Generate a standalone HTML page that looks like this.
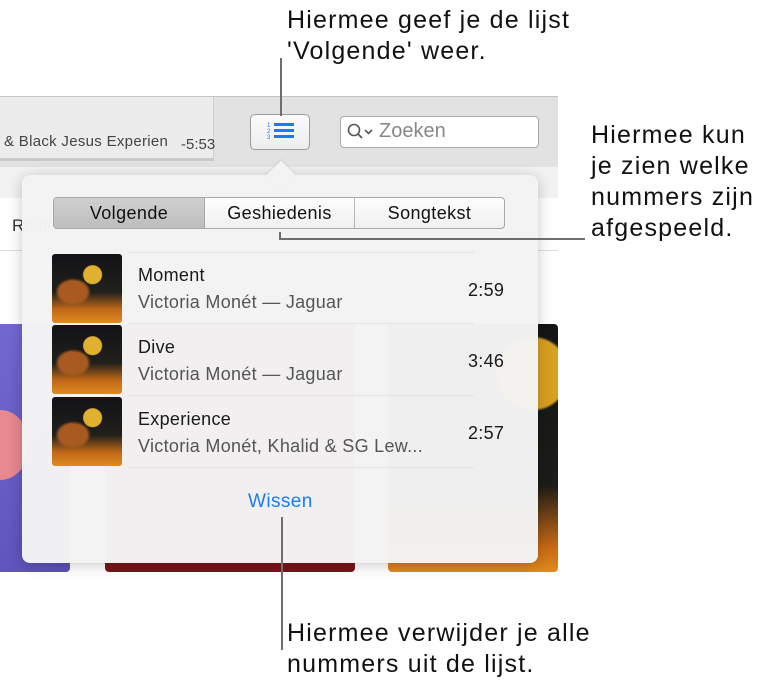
<!DOCTYPE html>
<html><head><meta charset="utf-8"><style>
*{margin:0;padding:0;box-sizing:border-box}
body{width:769px;height:689px;background:#fff;position:relative;overflow:hidden;font-family:"Liberation Sans",sans-serif}
.a{position:absolute}
.ann{position:absolute;font-size:25px;letter-spacing:1.2px;line-height:31px;color:#111;white-space:nowrap}
.ln{position:absolute;background:#6e6e6e}
.t1{font-size:18px;color:#1a1a1a;letter-spacing:0.3px}
.t2{font-size:18px;color:#555;letter-spacing:0.3px}
.art{position:absolute;width:70px;height:69px;border-radius:3px;overflow:hidden;background:radial-gradient(circle at 58% 30%,#e0b030 0 9px,transparent 10px),radial-gradient(ellipse at 30% 55%,#a85a20 0 14px,transparent 18px),linear-gradient(180deg,#141216 0%,#20201c 55%,#c06818 80%,#e08a20 100%)}
</style></head><body>
<div class="a" style="left:0;top:96px;width:558px;height:71px;background:#e2e2e2;border-top:1px solid #c4c4c4"></div>
<div class="a" style="left:0;top:97px;width:214px;height:64px;background:#ececec;border-bottom:3px solid #c9c9c9;border-right:1px solid #d0d0d0"></div>
<div class="a" style="left:4px;top:133px;font-size:15px;color:#444;letter-spacing:0.3px">&amp; Black Jesus Experien</div>
<div class="a" style="left:181px;top:136px;font-size:15px;color:#444">-5:53</div>
<div class="a" style="left:250px;top:114px;width:60px;height:36px;border:1px solid #9c9c9c;border-radius:5px;background:linear-gradient(#fbfbfb,#ededed)"></div>
<svg class="a" style="left:264px;top:121px" width="32" height="22"><g fill="#1a7bf2"><rect x="10" y="2" width="20" height="3"/><rect x="10" y="8" width="20" height="3"/><rect x="10" y="14" width="20" height="3"/><text x="3" y="6" font-size="6" font-family="Liberation Sans">1</text><text x="3" y="12" font-size="6" font-family="Liberation Sans">2</text><text x="3" y="18" font-size="6" font-family="Liberation Sans">3</text></g></svg>
<div class="a" style="left:340px;top:116px;width:199px;height:32px;background:#fff;border:1px solid #a8a8a8;border-radius:4px"></div>
<svg class="a" style="left:346px;top:121px;width:34px;height:22px;background:#fff"><circle cx="8" cy="9" r="5.5" fill="none" stroke="#555" stroke-width="1.6"/><line x1="12" y1="13" x2="16" y2="17" stroke="#555" stroke-width="1.8"/><path d="M19 9l3.5 3.5L26 9" fill="none" stroke="#555" stroke-width="1.6"/></svg>
<div class="a" style="left:379px;top:120px;font-size:20px;color:#888">Zoeken</div>
<div class="a" style="left:0;top:167px;width:558px;height:31px;background:#f2f2f2"></div>
<div class="a" style="left:0;top:250px;width:558px;height:1px;background:#ddd"></div>
<div class="a" style="left:12px;top:216px;font-size:17px;color:#333">Radio</div>
<div class="a" style="left:0;top:324px;width:70px;height:248px;background:linear-gradient(135deg,#7268d0,#5a50b8);border-radius:0 0 4px 0"></div>
<div class="a" style="left:0;top:410px;width:26px;height:70px;background:#e88890;border-radius:0 30px 30px 0"></div>
<div class="a" style="left:105px;top:324px;width:250px;height:248px;background:#7a1418;border-radius:4px"></div>
<div class="a" style="left:388px;top:324px;width:170px;height:248px;background:radial-gradient(circle at 85% 20%,#d8a020 0 35px,transparent 38px),linear-gradient(180deg,#151515 0%,#1c1c18 65%,#c86a14 90%,#e08a20 100%);border-radius:4px"></div>
<div class="a" style="left:22px;top:175px;width:516px;height:388px;background:rgba(243,243,243,0.985);border-radius:8px;box-shadow:0 2px 14px rgba(0,0,0,0.22)"></div>
<div class="a" style="left:270px;top:165px;width:22px;height:22px;background:#f3f3f3;transform:rotate(45deg);box-shadow:-1px -1px 2px rgba(0,0,0,0.08)"></div>
<div class="a" style="left:53px;top:197px;width:452px;height:32px;border:1px solid #a8a8a8;border-radius:4px;background:linear-gradient(#fdfdfd,#f0f0f0);display:flex;font-size:18px;color:#111;overflow:hidden;letter-spacing:0.4px">
<div style="width:151px;text-align:center;line-height:30px;background:linear-gradient(#d0d0d0,#bdbdbd);border-right:1px solid #a8a8a8">Volgende</div>
<div style="width:150px;text-align:center;line-height:30px;border-right:1px solid #b8b8b8">Geshiedenis</div>
<div style="flex:1;text-align:center;line-height:30px">Songtekst</div></div>
<div class="a" style="left:128px;top:252px;width:346px;height:1px;background:#e2e2e2"></div>
<div class="art" style="left:52px;top:254px"></div>
<div class="a t1" style="left:138px;top:265px">Moment</div>
<div class="a t2" style="left:138px;top:292px">Victoria Monét — Jaguar</div>
<div class="a t1" style="left:468px;top:280px">2:59</div>
<div class="a" style="left:128px;top:323px;width:346px;height:1px;background:#e2e2e2"></div>
<div class="art" style="left:52px;top:325px"></div>
<div class="a t1" style="left:138px;top:337px">Dive</div>
<div class="a t2" style="left:138px;top:364px">Victoria Monét — Jaguar</div>
<div class="a t1" style="left:468px;top:351px">3:46</div>
<div class="a" style="left:128px;top:395px;width:346px;height:1px;background:#e2e2e2"></div>
<div class="art" style="left:52px;top:397px"></div>
<div class="a t1" style="left:138px;top:409px">Experience</div>
<div class="a t2" style="left:138px;top:436px">Victoria Monét, Khalid &amp; SG Lew...</div>
<div class="a t1" style="left:468px;top:423px">2:57</div>
<div class="a" style="left:128px;top:467px;width:346px;height:1px;background:#e2e2e2"></div>
<div class="a" style="left:248px;top:491px;font-size:19px;color:#1a7bf2;letter-spacing:0.4px">Wissen</div>
<div class="ann" style="left:287px;top:5px">Hiermee geef je de lijst<br>'Volgende' weer.</div>
<div class="ln" style="left:280px;top:58px;width:2px;height:58px"></div>
<div class="ann" style="left:591px;top:120px">Hiermee kun<br>je zien welke<br>nummers zijn<br>afgespeeld.</div>
<div class="ln" style="left:279px;top:232px;width:2px;height:8px"></div>
<div class="ln" style="left:279px;top:238px;width:306px;height:2px"></div>
<div class="ln" style="left:281px;top:517px;width:2px;height:133px"></div>
<div class="ann" style="left:287px;top:618px">Hiermee verwijder je alle<br>nummers uit de lijst.</div>
</body></html>
